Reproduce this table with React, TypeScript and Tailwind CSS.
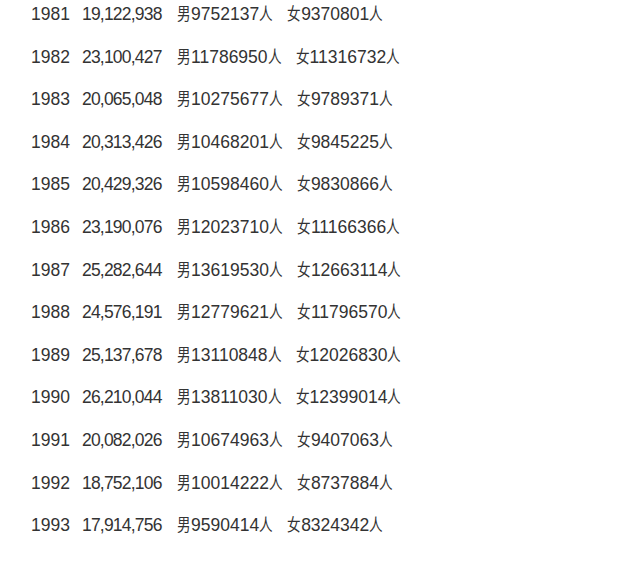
const rows: [string, string, string, string][] = [
  ["1981", "19,122,938", "9752137", "9370801"],
  ["1982", "23,100,427", "11786950", "11316732"],
  ["1983", "20,065,048", "10275677", "9789371"],
  ["1984", "20,313,426", "10468201", "9845225"],
  ["1985", "20,429,326", "10598460", "9830866"],
  ["1986", "23,190,076", "12023710", "11166366"],
  ["1987", "25,282,644", "13619530", "12663114"],
  ["1988", "24,576,191", "12779621", "11796570"],
  ["1989", "25,137,678", "13110848", "12026830"],
  ["1990", "26,210,044", "13811030", "12399014"],
  ["1991", "20,082,026", "10674963", "9407063"],
  ["1992", "18,752,106", "10014222", "8737884"],
  ["1993", "17,914,756", "9590414", "8324342"],
];

// the CJK glyphs in the shot are tall and narrow, so squeeze them a bit
const Cjk = ({ children }: { children: string }) => (
  <span className="inline-block w-[14px] origin-left scale-x-[0.8] text-[17px] leading-none">
    {children}
  </span>
);

const App = () => {
  return (
    <div
      className="w-[640px] h-[563px] bg-white overflow-hidden text-[#333] text-[17.5px] leading-[28px]"
      style={{ fontFamily: '"Liberation Sans", "Noto Sans CJK SC", sans-serif' }}
    >
      <div className="flex flex-col gap-[14.6px] pl-[31px]">
        {rows.map(([year, total, male, female]) => (
          <div key={year} className="flex h-[28px] items-baseline whitespace-nowrap">
            <span className="w-[51px]">{year}</span>
            <span className="w-[95px] tracking-[-0.8px]">{total}</span>
            <span>
              <Cjk>男</Cjk>
              {male}
              <Cjk>人</Cjk>
            </span>
            <span className="ml-[14px]">
              <Cjk>女</Cjk>
              {female}
              <Cjk>人</Cjk>
            </span>
          </div>
        ))}
      </div>
    </div>
  );
};

export default App;
